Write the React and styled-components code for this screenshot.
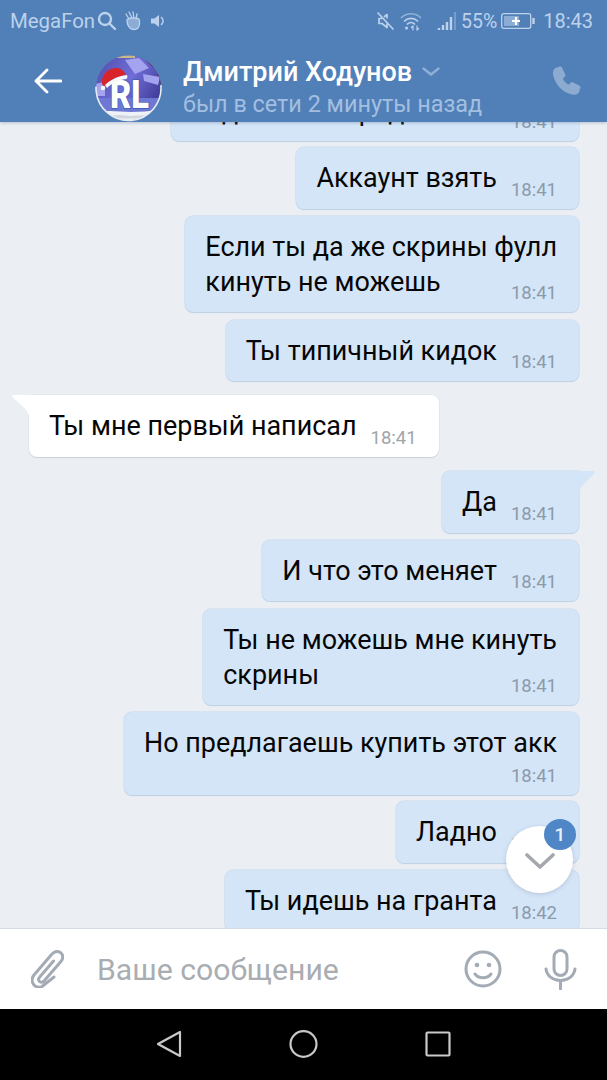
import React from "react";
import styled, { createGlobalStyle } from "styled-components";

const Global = createGlobalStyle`
  html, body { margin: 0; padding: 0; background: #000; }
  * { box-sizing: border-box; }
`;

const Phone = styled.div`
  position: relative;
  width: 607px;
  height: 1080px;
  display: flex;
  flex-direction: column;
  overflow: hidden;
  font-family: Roboto, "Noto Sans", sans-serif;
  background: #ebeff4;
`;

const Header = styled.header`
  position: relative;
  z-index: 2;
  flex: 0 0 122px;
  background: #5180b8;
  box-shadow: 0 1px 3px rgba(60, 80, 110, 0.28);
  display: flex;
  flex-direction: column;
`;

const StatusBar = styled.div`
  height: 42px;
  display: flex;
  align-items: center;
  padding: 0 14px 0 10px;
  color: #bcd2ec;
`;

const Carrier = styled.span`
  font-size: 20.4px;
  margin-right: 2px;
`;

const StatusLeft = styled.div`
  display: flex;
  align-items: center;
  gap: 7px;
`;

const StatusRight = styled.div`
  margin-left: auto;
  display: flex;
  align-items: center;
`;

const StatusText = styled.span`
  font-size: ${(p) => p.$size}px;
  margin-left: ${(p) => p.$gap}px;
`;

const StatusSlot = styled.span`
  display: flex;
  margin-left: ${(p) => p.$gap || 0}px;
`;

const SearchSlot = styled.span`
  display: flex;
  margin-left: -7px;
`;

const NavRow = styled.div`
  flex: 1;
  display: flex;
  align-items: flex-start;
  padding: 12px 25px 0 34px;
`;

const BackButton = styled.span`
  display: flex;
  margin-top: 14px;
  width: 61px;
`;

const AvatarWrap = styled.span`
  display: flex;
  width: 67px;
  height: 68px;
  margin-right: 21px;
`;

const TitleBlock = styled.div`
  flex: 1;
  display: flex;
  flex-direction: column;
`;

const TitleRow = styled.div`
  display: flex;
  align-items: center;
  height: 35px;
  gap: 10px;
`;

const Title = styled.span`
  font-size: 27px;
  font-weight: 500;
  color: #fff;
`;

const Subtitle = styled.span`
  font-size: 23.4px;
  line-height: 30px;
  color: #a3bfe0;
`;

const CallButton = styled.span`
  display: flex;
  margin-top: 12px;
`;

const Messages = styled.main`
  flex: 1;
  min-height: 0;
  overflow: hidden;
  padding: 0 28px 0 29px;
`;

const MessageList = styled.div`
  margin-top: -42.5px;
  display: flex;
  flex-direction: column;
`;

const Bubble = styled.div`
  position: relative;
  flex: none;
  align-self: ${(p) => (p.$in ? "flex-start" : "flex-end")};
  display: flex;
  flex-direction: ${(p) => (p.$layout === "inline" ? "row" : "column")};
  align-items: flex-end;
  gap: ${(p) => (p.$layout === "inline" ? "14px" : "0")};
  margin-top: ${(p) => p.$gap ?? 7.25}px;
  padding: 13px 22px 8px 20px;
  border-radius: 8px;
  background: ${(p) => (p.$in ? "#ffffff" : "#d4e5f8")};
  box-shadow: 0 1px 1px ${(p) => (p.$in ? "rgba(150,165,185,0.35)" : "#bfd0e4")},
    0 0 0 0.5px ${(p) => (p.$in ? "rgba(190,200,215,0.25)" : "#c6d7ea")};
  ${(p) => p.$tail && `border-${p.$in ? "top-left" : "top-right"}-radius: 0;`}
`;

const Tail = styled.svg`
  position: absolute;
  top: 0;
  ${(p) => (p.$in ? "left: -17px;" : "right: -16px;")}
  width: 18px;
  height: 24px;
`;

const MessageText = styled.div`
  align-self: flex-start;
  font-size: 26.95px;
  line-height: 35px;
  height: ${(p) => p.$lines * 35 + 5.5}px;
  padding-top: 1px;
  color: #060606;
  white-space: nowrap;
`;

const Time = styled.span`
  font-size: 18.5px;
  line-height: 21px;
  margin-top: ${(p) => (p.$layout === "overlay" ? -21 : 0)}px;
  color: ${(p) => (p.$in ? "#a0a4a9" : "#8b9aab")};
`;

const ScrollDown = styled.div`
  position: absolute;
  z-index: 1;
  left: 506px;
  top: 826px;
  width: 67px;
  height: 67px;
  border-radius: 50%;
  background: #fff;
  box-shadow: 0 1px 4px rgba(90, 100, 120, 0.25);
  display: flex;
  align-items: center;
  justify-content: center;
  padding-top: 3px;
`;

const Badge = styled.span`
  position: absolute;
  right: -3px;
  top: -7px;
  width: 32px;
  height: 31px;
  border-radius: 50%;
  background: #4f86c6;
  color: #e8f0fa;
  font-size: 19px;
  font-weight: 500;
  display: flex;
  align-items: center;
  justify-content: center;
`;

const Composer = styled.footer`
  position: relative;
  z-index: 2;
  flex: 0 0 81px;
  display: flex;
  align-items: center;
  background: #fff;
  border-top: 1px solid #d6dce4;
  padding: 0 30px 0 31px;
`;

const Placeholder = styled.span`
  flex: 1;
  margin-left: 33px;
  font-size: 30.2px;
  color: #a9adb2;
`;

const ComposerIcon = styled.span`
  display: flex;
  margin-left: ${(p) => p.$gap || 0}px;
`;

const NavBar = styled.nav`
  flex: 0 0 71px;
  background: #000;
  display: flex;
  align-items: center;
  padding: 0 0 2px 156px;
`;

const NavIcon = styled.span`
  display: flex;
  margin-right: ${(p) => p.$gap || 0}px;
`;

const StatusIcon = styled.svg`
  display: block;
  fill: none;
  stroke: currentColor;
`;

const Avatar = () => (
  <svg width="67" height="68" viewBox="0 0 67 68">
    <defs>
      <clipPath id="av">
        <circle cx="33.5" cy="34" r="32.5" />
      </clipPath>
      <linearGradient id="avbg" x1="0" y1="0" x2="1" y2="0.6">
        <stop offset="0" stopColor="#4f4aa8" />
        <stop offset="0.55" stopColor="#6f6ed8" />
        <stop offset="1" stopColor="#3f3a94" />
      </linearGradient>
    </defs>
    <g clipPath="url(#av)">
      <rect width="67" height="68" fill="url(#avbg)" />
      <path d="M14 0h26v4H14z" fill="#c9b78a" />
      <path d="M38 0h29v34L61 16 50 6z" fill="#6b2a46" />
      <path d="M30 6l14-2 10 10-14 6zM48 20l17 3-2 8-14-4zM0 30l10-2v14H0z" fill="#a3a3f0" />
      <path d="M0 44h67v20H0z" fill="#6d78d4" />
      <path d="M6 58c8-2 20 0 30 0s18-1 27-2v12H6z" fill="#eef1f5" />
      <path d="M16 62c8-2 14 0 20 0s10-1 16-1v2c-10 2-26 2-36 0z" fill="#cfd6df" />
    </g>
    <text x="15" y="54" textLength="39" lengthAdjust="spacingAndGlyphs" fontFamily="Roboto, sans-serif" fontWeight="900" fontSize="39" fill="#fff" stroke="#3b5fb0" strokeWidth="1.500" paintOrder="stroke">RL</text>
    <path d="M7 30C6 20 13 14 22 14c4 0 7 3 9 7-8 1-14 4-20 9l-2 3z" fill="#d8252b" />
    <path d="M10 31c5-5 13-9 22-10 1 2 0 4-1 4-8 1-14 4-19 9z" fill="#f6f6f6" />
    <circle cx="8" cy="34" r="2.300" fill="#f6f6f6" />
    <circle cx="33.5" cy="34" r="32.5" fill="none" stroke="#e6ebf2" strokeWidth="1.600" strokeDasharray="106 110" transform="rotate(-5 33.5 34)" />
  </svg>
);

const msgs = [
  { lines: ["Ведь я тебе продать акк"], gap: 0, layout: "inline" },
  { lines: ["Аккаунт взять"], gap: 6, layout: "inline" },
  { lines: ["Если ты да же скрины фулл", "кинуть не можешь"], layout: "overlay" },
  { lines: ["Ты типичный кидок"], layout: "inline" },
  { lines: ["Ты мне первый написал"], gap: 14, layout: "inline", in: true, tail: true },
  { lines: ["Да"], gap: 14.5, layout: "inline", tail: true },
  { lines: ["И что это меняет"], layout: "inline" },
  { lines: ["Ты не можешь мне кинуть", "скрины"], layout: "overlay" },
  { lines: ["Но предлагаешь купить этот акк"], layout: "below" },
  { lines: ["Ладно"], gap: 6.5, layout: "inline" },
  { lines: ["Ты идешь на гранта"], layout: "inline", time: "18:42" },
];

export default function App() {
  return (
    <Phone>
      <Global />
      <Header>
        <StatusBar>
          <StatusLeft>
            <Carrier>MegaFon</Carrier>
            <SearchSlot>
              <StatusIcon width="20" height="20" viewBox="0 0 20 20" strokeWidth="2.400" strokeLinecap="round">
                <circle cx="8" cy="8" r="6" />
                <path d="M12.500 12.500L18 18" />
              </StatusIcon>
            </SearchSlot>
            <StatusSlot $gap={0}>
              <StatusIcon width="18" height="20" viewBox="0 0 18 20" strokeWidth="1.300">
                <path d="M2 3l3 5M5 1l3 6M9 1l1 6M13 3l-1 5" strokeLinecap="round" />
                <path d="M3 9c1-2 9-3 12-1 1 3 1 6-1 9-2 2-6 2-8 0-2-2-3-5-3-8z" fill="currentColor" fillOpacity="0.55" />
              </StatusIcon>
            </StatusSlot>
            <StatusSlot $gap={1}>
              <StatusIcon width="16" height="16" viewBox="0 0 16 16" strokeWidth="1.600">
                <path d="M1 5.500h3.500L9 2v12L4.500 10.500H1z" fill="currentColor" stroke="none" />
                <path d="M11.500 4.500c2 2 2 5 0 7" strokeLinecap="round" />
              </StatusIcon>
            </StatusSlot>
          </StatusLeft>
          <StatusRight>
            <StatusSlot>
              <StatusIcon width="19" height="20" viewBox="0 0 19 20" strokeWidth="1.700">
                <path d="M6 7.500h-3v5h3l5 4v-4M11 7.500V3.500L8 6" strokeLinejoin="round" />
                <path d="M2 2l15 16" strokeLinecap="round" />
              </StatusIcon>
            </StatusSlot>
            <StatusSlot $gap={5}>
              <StatusIcon width="22" height="20" viewBox="0 0 22 20" strokeWidth="1.700" strokeLinecap="round">
                <path d="M1.500 6.500c5-5 14-5 19 0" opacity="0.6" />
                <path d="M4.500 10c3.500-3.500 9.500-3.500 13 0" />
                <path d="M7.500 13c2-2 5-2 7 0" />
                <circle cx="6.500" cy="17" r="1.500" fill="currentColor" stroke="none" />
                <path d="M13 15v4M17 15v4M13 15l-1.500 1.500M17 19l1.500-1.500" strokeWidth="1.200" />
              </StatusIcon>
            </StatusSlot>
            <StatusSlot $gap={15}>
              <StatusIcon width="19" height="20" viewBox="0 0 19 20" strokeWidth="2.400">
                <path d="M2 19v-2M6 19v-5M10 19v-8M14 19V6" />
                <path d="M18 19V1" strokeWidth="1.200" opacity="0.6" />
              </StatusIcon>
            </StatusSlot>
            <StatusText $size={19.5} $gap={5}>55%</StatusText>
            <StatusSlot $gap={4}>
              <StatusIcon width="35" height="16" viewBox="0 0 35 16" strokeWidth="1.300">
                <rect x="0.700" y="0.700" width="29" height="14.600" rx="2" />
                <rect x="3" y="3" width="15" height="10" fill="currentColor" stroke="none" opacity="0.55" />
                <path d="M32.500 5v6" strokeWidth="2.400" />
                <path d="M11 8h8M15 4v8" stroke="#fff" strokeWidth="2.200" />
              </StatusIcon>
            </StatusSlot>
            <StatusText $size={20} $gap={7}>18:43</StatusText>
          </StatusRight>
        </StatusBar>
        <NavRow>
          <BackButton>
            <svg width="28" height="26" viewBox="0 0 28 26" fill="none" stroke="#fff" strokeWidth="2.800" strokeLinecap="round" strokeLinejoin="round">
              <path d="M27 13H2M13 2L2 13l11 11" />
            </svg>
          </BackButton>
          <AvatarWrap>
            <Avatar />
          </AvatarWrap>
          <TitleBlock>
            <TitleRow>
              <Title>Дмитрий Ходунов</Title>
              <svg width="18" height="9" viewBox="0 0 18 9" fill="none" stroke="#8fb0d6" strokeWidth="2.400" strokeLinecap="round" strokeLinejoin="round">
                <path d="M1.500 1.500L9 7.500l7.500-6" />
              </svg>
            </TitleRow>
            <Subtitle>был в сети 2 минуты назад</Subtitle>
          </TitleBlock>
          <CallButton>
            <svg width="30" height="30" viewBox="0 0 30 30" fill="#8dabd0" stroke="#8dabd0" strokeWidth="3" strokeLinejoin="round" strokeLinecap="round">
              <path d="M4 3.500l4.500-1.500 3.500 7.500-3 3c1.500 3.500 4.500 6.500 8 8l3-3 7 3.500-1.500 5c-1 1-3 1.500-5 1C11 25 4.500 17.500 2.500 8.500 2.200 6.500 2.800 4.500 4 3.500z" />
            </svg>
          </CallButton>
        </NavRow>
      </Header>
      <Messages>
        <MessageList>
          {msgs.map((m, i) => (
            <Bubble key={i} $in={m.in} $layout={m.layout} $gap={m.gap} $tail={m.tail}>
              {m.tail && (
                <Tail $in={m.in} viewBox="0 0 18 24" preserveAspectRatio="none">
                  {m.in ? (
                    <path d="M18 0H1.500C0 0-.4 1 .5 2 6 8 17 14 18 24z" fill="#fff" />
                  ) : (
                    <path d="M0 0h16c1.500 0 2 1 1.200 2.300C13 8 2 16 0 24z" fill="#d4e5f8" />
                  )}
                </Tail>
              )}
              <MessageText $lines={m.lines.length}>
                {m.lines.map((l, j) => (
                  <React.Fragment key={j}>
                    {j > 0 && <br />}
                    {l}
                  </React.Fragment>
                ))}
              </MessageText>
              <Time $in={m.in} $layout={m.layout}>{m.time || "18:41"}</Time>
            </Bubble>
          ))}
        </MessageList>
      </Messages>
      <ScrollDown>
        <svg width="30" height="16" viewBox="0 0 30 16" fill="none" stroke="#a4a8ad" strokeWidth="3.600" strokeLinecap="round" strokeLinejoin="round">
          <path d="M2 2l13 12L28 2" />
        </svg>
        <Badge>1</Badge>
      </ScrollDown>
      <Composer>
        <ComposerIcon>
          <svg width="33" height="38" viewBox="0 0 33 38" fill="none" stroke="#a3abb5" strokeWidth="3" strokeLinecap="round" strokeLinejoin="round">
            <path d="M23 27L11 36.500c-3 1.500-7 .5-8.700-2.500C.5 31 1 27.500 3 25L21 4c3-3 6.500-3 9-1 2.500 2.500 2 6-.5 9L13 31c-1.500 1.500-3.500 1.500-4.500.5-1.200-1.200-1-3 .2-4.500L22.500 11" />
          </svg>
        </ComposerIcon>
        <Placeholder>Ваше сообщение</Placeholder>
        <ComposerIcon>
          <svg width="38" height="38" viewBox="0 0 38 38" fill="none" stroke="#a3abb5" strokeWidth="3" strokeLinecap="round">
            <circle cx="19" cy="19" r="17" />
            <circle cx="13" cy="15" r="2.300" fill="#a3abb5" stroke="none" />
            <circle cx="25" cy="15" r="2.300" fill="#a3abb5" stroke="none" />
            <path d="M11 24c4 5 12 5 16 0" />
          </svg>
        </ComposerIcon>
        <ComposerIcon $gap={42}>
          <svg width="33" height="41" viewBox="0 0 33 41" fill="none" stroke="#a3abb5" strokeWidth="3" strokeLinecap="round">
            <rect x="10" y="1.500" width="13" height="25" rx="6.500" />
            <path d="M2 20c1 7 7 11.500 14.500 11.500S30 27 31 20M16.500 32v8" />
          </svg>
        </ComposerIcon>
      </Composer>
      <NavBar>
        <NavIcon $gap={107}>
          <svg width="26" height="28" viewBox="0 0 26 28" fill="none" stroke="#c9c9c9" strokeWidth="2.200" strokeLinejoin="round">
            <path d="M24 2v24L2 14z" />
          </svg>
        </NavIcon>
        <NavIcon $gap={107}>
          <svg width="29" height="28" viewBox="0 0 29 28" fill="none" stroke="#c9c9c9" strokeWidth="2.200">
            <ellipse cx="14.500" cy="14" rx="13" ry="12.800" />
          </svg>
        </NavIcon>
        <NavIcon>
          <svg width="26" height="26" viewBox="0 0 26 26" fill="none" stroke="#c9c9c9" strokeWidth="2.200" strokeLinejoin="round">
            <rect x="1.500" y="1.500" width="23" height="23" rx="1" />
          </svg>
        </NavIcon>
      </NavBar>
    </Phone>
  );
}
